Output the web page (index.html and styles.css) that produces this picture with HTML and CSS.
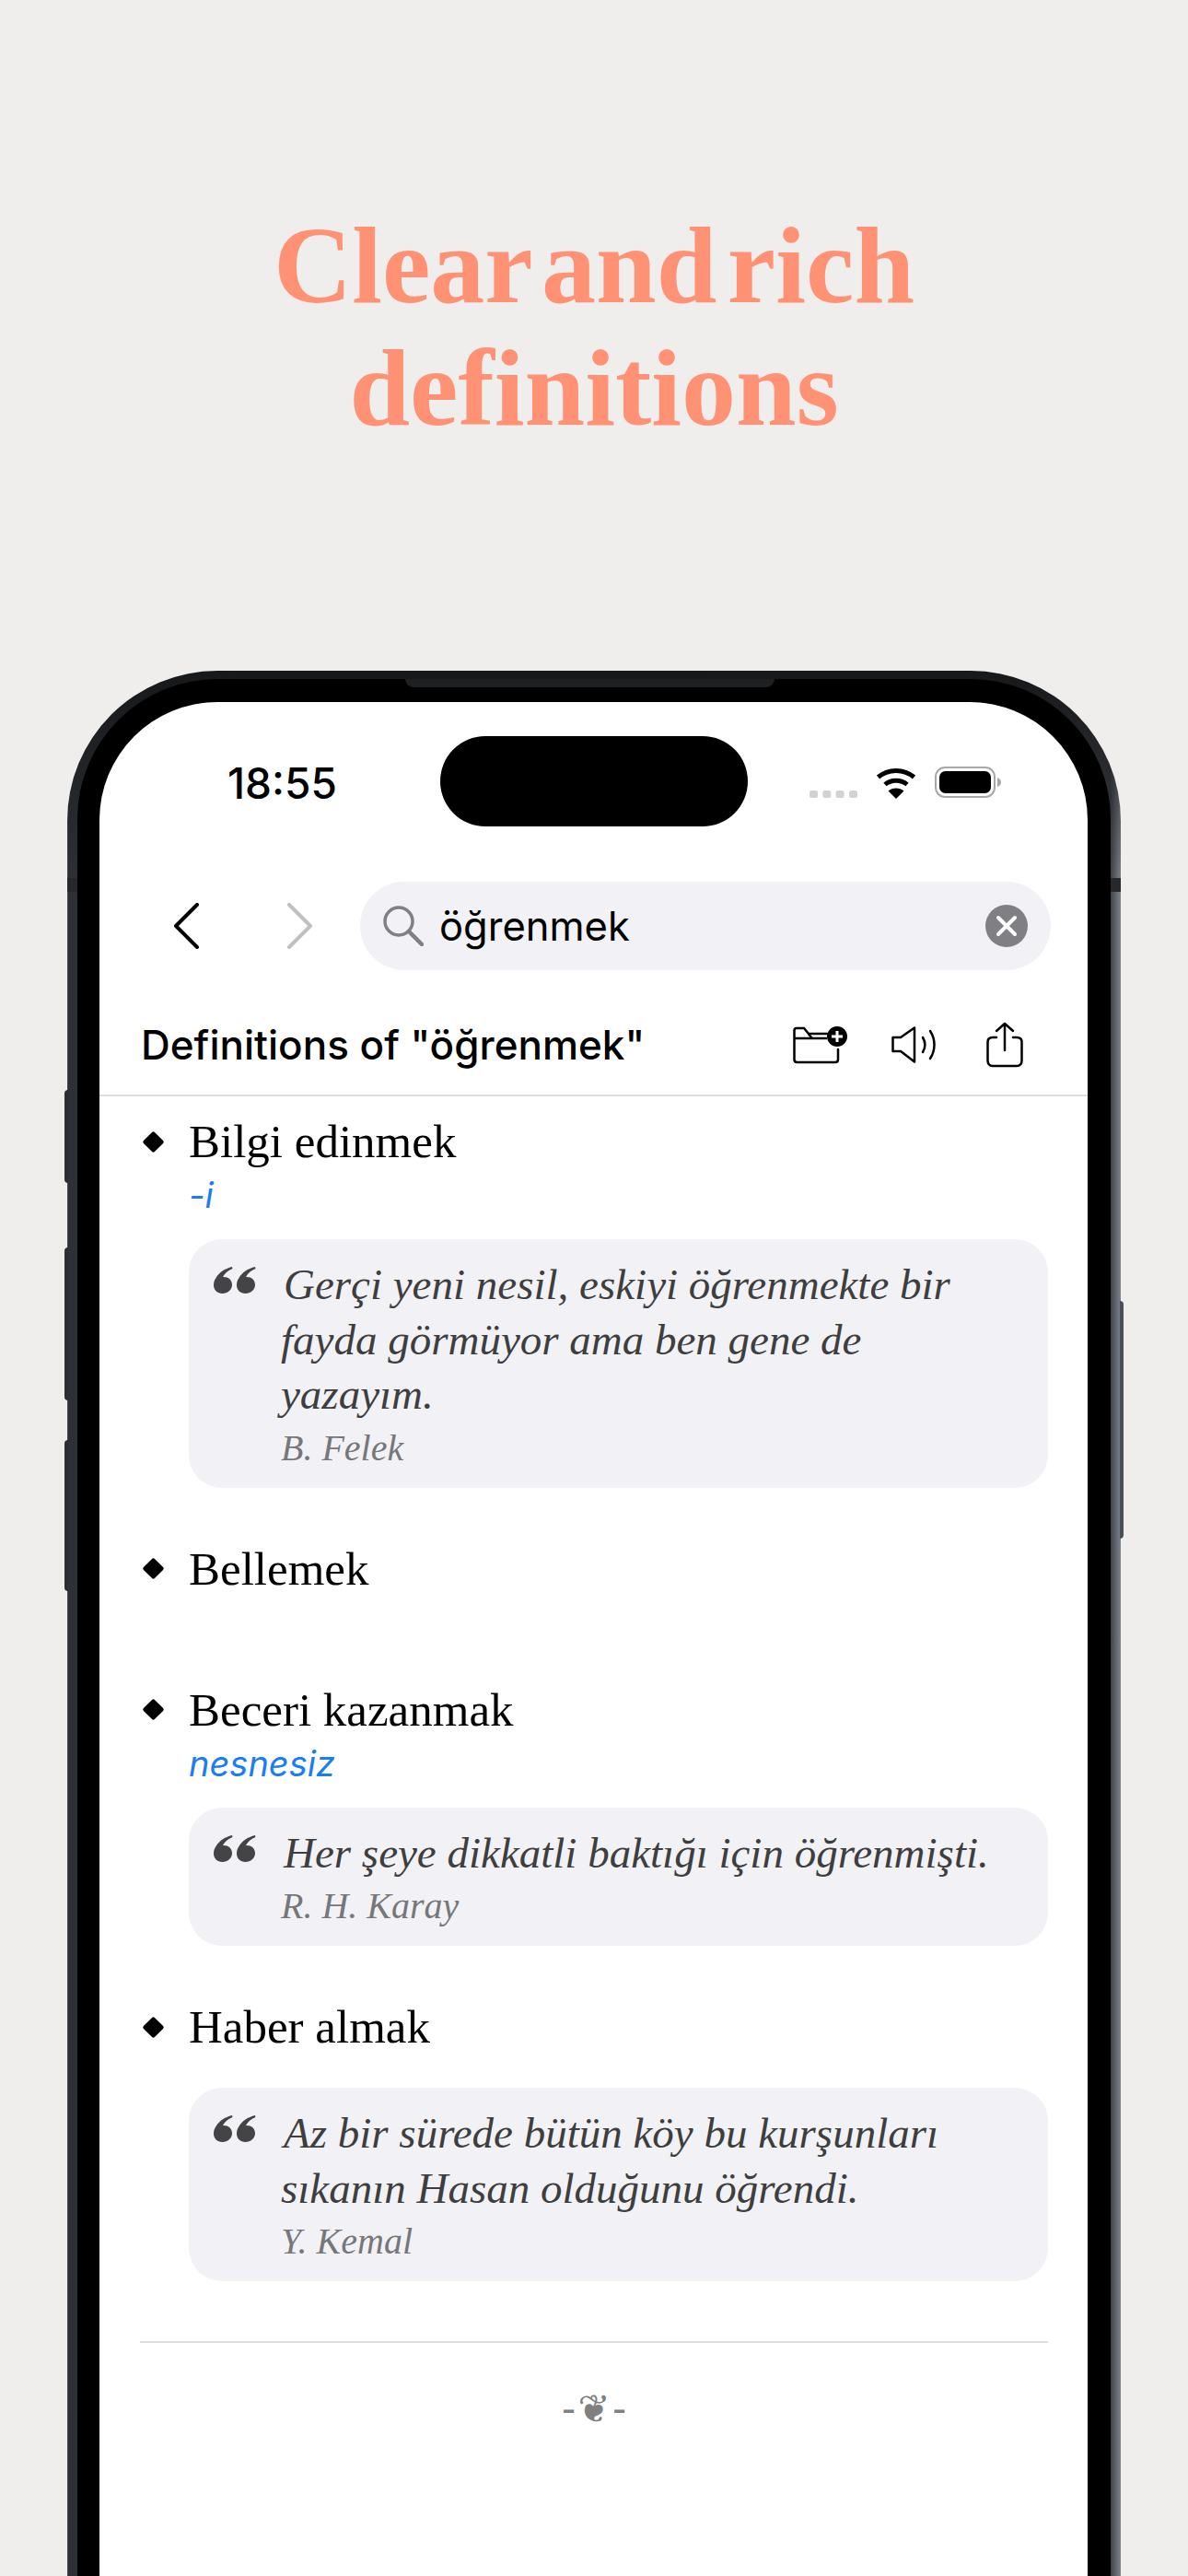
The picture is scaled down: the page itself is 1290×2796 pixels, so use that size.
FILE: index.html
```html
<!DOCTYPE html>
<html lang="en">
<head>
    <meta charset="UTF-8">
    <title>Clear and rich definitions</title>
    <link rel="stylesheet" href="styles.css">
</head>
<body>
    <header class="hero">
        <h1>Clear and rich<br>definitions</h1>
    </header>

    <div class="phone">
        <span class="side-btn side-left btn-mute"></span>
        <span class="side-btn side-left btn-up"></span>
        <span class="side-btn side-left btn-down"></span>
        <span class="side-btn side-right btn-power"></span>
        <span class="band band-left"></span>
        <span class="band band-right"></span>
        <div class="bezel">
            <span class="speaker"></span>
            <div class="screen">
                <div class="status-bar">
                    <div class="time">18:55</div>
                    <div class="island"></div>
                    <div class="status-icons">
                        <svg width="52" height="8" viewBox="0 0 52 8"><g fill="#d2d2d2"><rect width="9" height="8" rx="2.5"/><rect x="14.3" width="9" height="8" rx="2.5"/><rect x="28.6" width="9" height="8" rx="2.5"/><rect x="43" width="9" height="8" rx="2.5"/></g></svg>
                        <svg class="wifi" width="44" height="34" viewBox="0 0 44 34"><path d="M2.5 10.5C13.5 1 30.5 1 41.5 10.5" fill="none" stroke="#000" stroke-width="5"/><path d="M10 18.5C16.5 12.7 27.5 12.7 34 18.5" fill="none" stroke="#000" stroke-width="5"/><path d="M22 34L13.5 25.5C18 21.5 26 21.500 30.5 25.5Z"/></svg>
                        <svg width="72" height="34" viewBox="0 0 72 34"><rect x="1" y="1" width="64" height="32" rx="10" fill="none" stroke="#a8a8a8" stroke-width="2"/><rect x="5" y="5" width="56" height="24" rx="6.5"/><path d="M68 12C71 13 72 15 72 17C72 19 71 21 68 22Z" fill="#a8a8a8"/></svg>
                    </div>
                </div>

                <div class="nav-row">
                    <svg class="chev" width="28" height="50" viewBox="0 0 28 50"><path d="M26 2L3 25L26 48" fill="none" stroke="#000" stroke-width="4" stroke-linecap="round" stroke-linejoin="round"/></svg>
                    <svg class="chev chev-next" width="28" height="50" viewBox="0 0 28 50"><path d="M2 2L25 25L2 48" fill="none" stroke="#c0c0c0" stroke-width="4" stroke-linecap="round" stroke-linejoin="round"/></svg>
                    <div class="search">
                        <svg width="44" height="44" viewBox="0 0 44 44"><circle cx="17" cy="17" r="15" fill="none" stroke="#808084" stroke-width="3.5"/><path d="M28 28L42 42" stroke="#808084" stroke-width="4.5" stroke-linecap="round"/></svg>
                        <span class="search-text">öğrenmek</span>
                        <svg class="clear" width="46" height="46" viewBox="0 0 46 46"><circle cx="23" cy="23" r="23" fill="#808084"/><path d="M14 14L32 32M32 14L14 32" stroke="#fff" stroke-width="4" stroke-linecap="round"/></svg>
                    </div>
                </div>

                <div class="title-row">
                    <h2>Definitions of "öğrenmek"</h2>
                    <div class="actions">
                        <svg width="60" height="42" viewBox="0 0 60 42" fill="none" stroke="#000" stroke-width="2.5"><path d="M37 9H17L12 3H4C2.5 3 1.5 4 1.5 5.5V37C1.5 39 2.5 40 4.5 40H46C48 40 49 39 49 37V26" stroke-linecap="round"/><path d="M2 14H37"/><path d="M17 9.5L21 14"/><circle cx="48" cy="12" r="11" fill="#000" stroke="none"/><path d="M48 6V18M42 12H54" stroke="#fff" stroke-width="3"/></svg>
                        <svg width="50" height="40" viewBox="0 0 50 40" fill="none" stroke="#000" stroke-width="2.5" stroke-linejoin="round" stroke-linecap="round"><path d="M1.5 12V27H10L25 38.5V1.5L10 12Z"/><path d="M34 12C37 17 37 23 34 28"/><path d="M42 5C48 14 48 26 42 35"/></svg>
                        <svg class="share" width="40" height="50" viewBox="0 0 40 50" fill="none" stroke="#000" stroke-width="2.5" stroke-linecap="round" stroke-linejoin="round"><path d="M11 17H7C3 17 1.5 19 1.5 22V42C1.5 46 3 48 7 48H33C37 48 38.5 46 38.5 42V22C38.5 19 37 17 33 17H29"/><path d="M20 31V2M11 10L20 2L29 10"/></svg>
                    </div>
                </div>

                <main class="content">
                    <section class="item">
                        <div class="item-title"><span class="diamond"></span>Bilgi edinmek</div>
                        <div class="item-tag">-i</div>
                        <div class="quote">
                            <svg class="quote-mark" width="46" height="29" viewBox="0 0 46 29"><g fill="#444446"><path d="M20 0C12 2 6 6 2.5 12C0.5 15 0 17 0 20C0 25 4 29 9.5 29C15 29 20 25 20 19.5C20 14 15.5 10.5 10 11C12 7 15.5 4 20.5 2Z"/><path d="M45 0C37 2 31 6 27.5 12C25.5 15 25 17 25 20C25 25 29 29 34.5 29C40 29 45 25 45 19.5C45 14 40.5 10.5 35 11C37 7 40.5 4 45.5 2Z"/></g></svg>
                            <div class="quote-body">
                                <p>Gerçi yeni nesil, eskiyi öğrenmekte bir<br>fayda görmüyor ama ben gene de<br>yazayım.</p>
                                <cite>B. Felek</cite>
                            </div>
                        </div>
                    </section>

                    <section class="item item-empty">
                        <div class="item-title"><span class="diamond"></span>Bellemek</div>
                    </section>

                    <section class="item">
                        <div class="item-title"><span class="diamond"></span>Beceri kazanmak</div>
                        <div class="item-tag">nesnesiz</div>
                        <div class="quote">
                            <svg class="quote-mark" width="46" height="29" viewBox="0 0 46 29"><g fill="#444446"><path d="M20 0C12 2 6 6 2.5 12C0.5 15 0 17 0 20C0 25 4 29 9.5 29C15 29 20 25 20 19.5C20 14 15.5 10.5 10 11C12 7 15.5 4 20.5 2Z"/><path d="M45 0C37 2 31 6 27.5 12C25.5 15 25 17 25 20C25 25 29 29 34.5 29C40 29 45 25 45 19.5C45 14 40.5 10.5 35 11C37 7 40.5 4 45.5 2Z"/></g></svg>
                            <div class="quote-body">
                                <p>Her şeye dikkatli baktığı için öğrenmişti.</p>
                                <cite>R. H. Karay</cite>
                            </div>
                        </div>
                    </section>

                    <section class="item">
                        <div class="item-title"><span class="diamond"></span>Haber almak</div>
                        <div class="quote">
                            <svg class="quote-mark" width="46" height="29" viewBox="0 0 46 29"><g fill="#444446"><path d="M20 0C12 2 6 6 2.5 12C0.5 15 0 17 0 20C0 25 4 29 9.5 29C15 29 20 25 20 19.5C20 14 15.5 10.5 10 11C12 7 15.5 4 20.5 2Z"/><path d="M45 0C37 2 31 6 27.5 12C25.5 15 25 17 25 20C25 25 29 29 34.5 29C40 29 45 25 45 19.5C45 14 40.5 10.5 35 11C37 7 40.5 4 45.5 2Z"/></g></svg>
                            <div class="quote-body">
                                <p>Az bir sürede bütün köy bu kurşunları<br>sıkanın Hasan olduğunu öğrendi.</p>
                                <cite>Y. Kemal</cite>
                            </div>
                        </div>
                    </section>

                    <footer class="end-mark">- ❦ -</footer>
                </main>
            </div>
        </div>
    </div>
</body>
</html>
```

FILE: styles.css
```css
html, body {
    margin: 0;
    height: 2796px;
    overflow: hidden;
}
body {
    background-color: #efeeec;
    font-family: "Inter", "Liberation Sans", sans-serif;
}

/* titolo in alto */
.hero {
    height: 728px;
    padding-top: 222px;
    box-sizing: border-box;
}
.hero h1 {
    margin: 0;
    text-align: center;
    font-family: "Liberation Serif", serif;
    font-weight: 700;
    font-size: 118px;
    line-height: 133px;
    word-spacing: -18px;
    color: #ff9274;
}

/* telefono */
.phone {
    position: relative;
    width: 1144px;
    height: 2200px;
    margin-left: 73px;
    padding: 9px 11px 0;
    box-sizing: border-box;
    background: linear-gradient(180deg, #17181a, rgba(23, 24, 26, 0) 230px),
        linear-gradient(90deg, #5a5d62, #2d3136 1px, #2f3338 50%, #3c4047 99%, #80848b);
    border-radius: 163px 163px 0 0;
}
.side-btn {
    position: absolute;
    width: 4px;
    background-color: #2b2e33;
}
.side-left {
    left: -3px;
    border-radius: 4px 0 0 4px;
}
.side-right {
    right: -3px;
    border-radius: 0 4px 4px 0;
    background-color: #4a4e55;
}
.btn-mute { top: 455px; height: 101px; }
.btn-up { top: 626px; height: 166px; }
.btn-down { top: 835px; height: 164px; }
.btn-power { top: 684px; height: 258px; }
.band {
    position: absolute;
    top: 225px;
    width: 11px;
    height: 15px;
    background-color: #26282b;
}
.band-left { left: 0; }
.band-right { right: 0; }

.bezel {
    position: relative;
    height: 100%;
    padding: 25px 25px 0 24px;
    box-sizing: border-box;
    background-color: #000;
    border-radius: 152px 152px 0 0;
}
.speaker {
    position: absolute;
    top: 0;
    left: 356px;
    width: 401px;
    height: 9px;
    background-color: #1e2022;
    border-radius: 0 0 9px 9px;
}
.screen {
    height: 100%;
    background-color: #fff;
    border-radius: 128px 128px 0 0;
    overflow: hidden;
}

/* barra di stato */
.status-bar {
    display: grid;
    grid-template-columns: 1fr 334px 1fr;
    padding-top: 37px;
}
.time {
    padding-left: 139px;
    font-size: 46px;
    font-weight: 500;
    line-height: 98px;
    margin-top: 2px;
    color: #000;
}
.island {
    height: 98px;
    background-color: #000;
    border-radius: 49px;
}
.status-icons {
    display: flex;
    align-items: flex-end;
    justify-content: flex-end;
    gap: 20px;
    height: 67px;
    padding-right: 94px;
}
.wifi { margin-bottom: -1px; }

/* ricerca */
.nav-row {
    display: flex;
    align-items: center;
    margin-top: 58px;
    padding: 0 40px 0 80px;
}
.chev-next { margin-left: 96px; }
.search {
    display: flex;
    align-items: center;
    flex: 1;
    height: 96px;
    margin-left: 51px;
    padding: 0 25px;
    background-color: #f2f2f6;
    border-radius: 48px;
}
.search-text {
    margin-left: 17px;
    font-size: 43.5px;
    color: #000;
}
.clear { margin-left: auto; }

.title-row {
    display: flex;
    align-items: center;
    justify-content: space-between;
    height: 137px;
    padding: 26px 70px 0 45px;
    box-sizing: border-box;
    border-bottom: 2px solid #dedee0;
}
.title-row h2 {
    margin: 0;
    font-size: 44px;
    font-weight: 500;
    color: #000;
}
.actions {
    display: flex;
    align-items: center;
    gap: 47px;
}
.share { margin-left: 6px; }

/* definizioni */
.content {
    padding: 19px 43px 0 47px;
}
.item {
    padding-bottom: 58px;
}
.item-empty {
    padding-bottom: 93px;
}
.item-title {
    display: flex;
    align-items: center;
    height: 60px;
    font-family: "Liberation Serif", serif;
    font-size: 51px;
    color: #000;
}
.diamond {
    width: 17px;
    height: 17px;
    margin: 0 30px 0 3px;
    background-color: #000;
    border-radius: 2px;
    transform: rotate(45deg);
}
.item-tag {
    height: 32px;
    margin: 8px 0 0 50px;
    font-size: 38px;
    line-height: 40px;
    font-style: italic;
    color: #1a7cf7;
}
.quote {
    display: flex;
    margin: 36px 0 0 50px;
    padding: 30px 20px 18px 27px;
    background-color: #f2f2f6;
    border-radius: 36px;
}
.quote-mark {
    flex-shrink: 0;
    margin-right: 27px;
}
.quote-body {
    margin-top: -10px;
}
.quote-body p {
    margin: 0 0 3px;
    font-family: "Liberation Serif", serif;
    font-size: 47px;
    line-height: 59.5px;
    font-style: italic;
    text-indent: 3px;
    color: #3e3e40;
}
.quote-body cite {
    display: block;
    font-family: "Liberation Serif", serif;
    font-size: 40px;
    line-height: 50px;
    color: #77777b;
}
.end-mark {
    margin: 7px 0 0 -3px;
    padding-top: 47px;
    border-top: 2px solid #dedee0;
    text-align: center;
    font-family: "DejaVu Sans", sans-serif;
    font-size: 42px;
    word-spacing: -11px;
    color: #808080;
}
```
